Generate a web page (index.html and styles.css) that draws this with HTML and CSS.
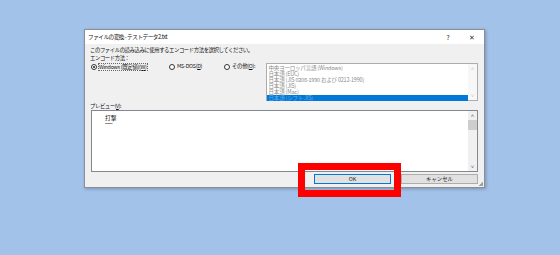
FILE: index.html
```html
<html>
  <head>
    <title>ファイルの変換</title>
    <link rel="stylesheet" href="styles.css">
  </head>
  <body>
    <div class="dialog">
      <div class="titlebar">
        <span class="title">ファイルの変換 - テストデータ2.txt</span>
        <span class="help">?</span>
        <span class="close">✕</span>
      </div>
      <div class="content">
        <div class="top">
          <div class="left">
            <p class="line">このファイルの読み込みに使用するエンコード方法を選択してください。</p>
            <p class="line">エンコード方法：</p>
            <div class="radios">
              <span class="radio first"><i class="dot checked"></i><span class="focus">Windows (既定値)(<u>W</u>)</span></span>
              <span class="radio second"><i class="dot"></i>MS-DOS(<u>D</u>)</span>
              <span class="radio"><i class="dot"></i>その他(<u>O</u>):</span>
            </div>
          </div>
          <div class="listbox">
            <div class="rows">
              <div class="row">中央ヨーロッパ言語 (Windows)</div>
              <div class="row">日本語 (EUC)</div>
              <div class="row">日本語 (JIS 0208-1990 および 0212-1990)</div>
              <div class="row">日本語 (JIS)</div>
              <div class="row">日本語 (Mac)</div>
              <div class="row selected">日本語 (シフト JIS)</div>
            </div>
            <div class="vscroll light">
              <span class="arrow">˄</span>
              <span class="arrow">˅</span>
            </div>
          </div>
        </div>
        <p class="line label">プレビュー(<u>V</u>):</p>
        <div class="preview">
          <div class="text">
            <p>打撃</p>
            <p class="dash">━━</p>
          </div>
          <div class="vscroll">
            <span class="arrow">˄</span>
            <span class="thumb"></span>
            <span class="arrow">˅</span>
          </div>
        </div>
        <div class="buttons">
          <button class="btn default">OK</button>
          <button class="btn">キャンセル</button>
        </div>
      </div>
      <span class="grip"></span>
    </div>
    <div class="highlight"></div>
  </body>
</html>
```

FILE: styles.css
```css
body {
  margin: 0;
  width: 560px;
  height: 255px;
  background-color: #a3c2e9;
  font-family: "Noto Sans CJK JP", sans-serif;
  position: relative;
  overflow: hidden;
}

p {
  margin: 0;
}

.dialog {
  position: absolute;
  left: 84px;
  top: 29px;
  width: 399px;
  height: 157px;
  border: 1px solid #8a8f96;
  background-color: #f0f0f0;
  box-shadow: 1px 1px 3px rgba(0, 0, 0, 0.25);
}

.titlebar {
  height: 14px;
  background-color: #fff;
  display: flex;
  align-items: center;
  font-size: 5.6px;
  color: #111;
  padding-left: 3px;
}

.title {
  flex: 1;
  letter-spacing: -0.45px;
}

.help {
  width: 24px;
  text-align: center;
  font-size: 6.5px;
  color: #333;
}

.close {
  width: 24px;
  text-align: center;
  font-size: 7px;
  color: #333;
}

.content {
  padding: 0 6px;
}

.top {
  display: flex;
  height: 58px;
}

.left {
  width: 175px;
  padding-top: 2px;
}

.line {
  height: 8px;
  line-height: 8px;
  font-size: 5.4px;
  color: #111;
  margin-left: -1px;
  white-space: nowrap;
  letter-spacing: -0.45px;
}

.radios {
  display: flex;
  height: 9px;
  align-items: center;
  font-size: 5.4px;
  color: #111;
  white-space: nowrap;
  letter-spacing: -0.3px;
}

.radio {
  display: flex;
  align-items: center;
  height: 7px;
  line-height: 7px;
}

.radio.first {
  width: 78px;
}

.radio.second {
  width: 55px;
}

.dot {
  width: 4px;
  height: 4px;
  border: 1px solid #333;
  border-radius: 50%;
  background-color: #fff;
  margin-right: 2px;
  box-sizing: content-box;
  position: relative;
}

.dot.checked::after {
  content: "";
  position: absolute;
  left: 1px;
  top: 1px;
  width: 2px;
  height: 2px;
  border-radius: 50%;
  background-color: #222;
}

.focus {
  display: inline-block;
  height: 6px;
  line-height: 6px;
  outline: 1px dotted #666;
  outline-offset: 0;
}

.listbox {
  margin-top: 19px;
  width: 211px;
  height: 36px;
  border: 1px solid #abadb3;
  background-color: #fff;
  display: flex;
}

.rows {
  flex: 1;
  padding-top: 1px;
}

.row {
  height: 6px;
  line-height: 6px;
  font-size: 5.5px;
  color: #8a8a8a;
  padding-left: 2px;
  white-space: nowrap;
  overflow: hidden;
  letter-spacing: -0.2px;
}

.row.selected {
  background-color: #0078d7;
  color: #6aaee8;
}

.vscroll {
  width: 9px;
  background-color: #f0f0f0;
  display: flex;
  flex-direction: column;
  align-items: center;
}

.vscroll.light {
  background-color: #f7f7f7;
  justify-content: space-between;
}

.arrow {
  height: 9px;
  line-height: 9px;
  font-size: 6px;
  color: #a0a0a0;
}

.vscroll.light .arrow {
  color: #c8c8c8;
}

.thumb {
  width: 9px;
  height: 10px;
  background-color: #cdcdcd;
  margin-bottom: auto;
}

.label {
  margin-left: -1px;
}

.preview {
  height: 60px;
  border: 1px solid #828790;
  background-color: #fff;
  display: flex;
}

.preview .text {
  flex: 1;
  padding: 4px 0 0 13px;
  font-size: 5.8px;
  color: #111;
}

.preview .text p {
  height: 6px;
  line-height: 6px;
}

.preview .text .dash {
  font-size: 4px;
  letter-spacing: -0.5px;
}

.preview .vscroll .arrow {
  color: #606060;
}

.buttons {
  display: flex;
  justify-content: flex-end;
  gap: 10px;
  margin-top: 2px;
}

.btn {
  width: 77px;
  height: 10px;
  padding: 0;
  border: 1px solid #adadad;
  background-color: #e1e1e1;
  font-family: "Noto Sans CJK JP", sans-serif;
  font-size: 5.4px;
  line-height: 8px;
  color: #222;
}

.btn.default {
  border-color: #0078d7;
}

.grip {
  position: absolute;
  right: 1px;
  bottom: 1px;
  width: 4px;
  height: 4px;
  background: linear-gradient(135deg, transparent 50%, #a0a0a0 50%);
}

.highlight {
  position: absolute;
  left: 298px;
  top: 163px;
  width: 89px;
  height: 20px;
  border: 7px solid #f00;
}
```
